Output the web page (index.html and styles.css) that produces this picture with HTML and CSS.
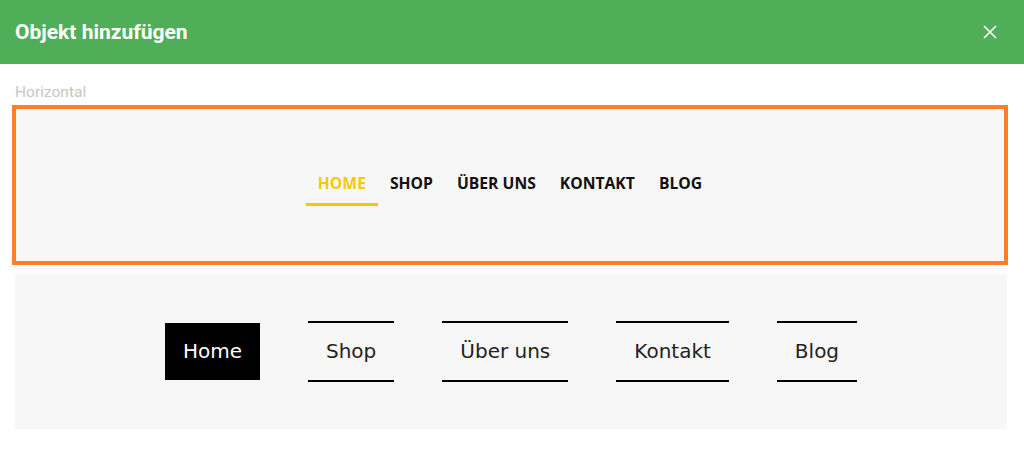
FILE: index.html
```html
<!DOCTYPE html>
<html lang="de">
<head>
    <meta charset="UTF-8">
    <meta name="viewport" content="width=device-width, initial-scale=1.0">
    <title>Objekt hinzufügen</title>
    <link rel="stylesheet" href="styles.css">
</head>
<body>
    <div class="dialog">
        <div class="dialog-header">
            <h1>Objekt hinzufügen</h1>
            <button class="close" aria-label="Schließen">
                <svg width="14" height="14" viewBox="0 0 14 14"><path d="M1 1 L13 13 M13 1 L1 13" stroke="#fff" stroke-width="1.6" fill="none"/></svg>
            </button>
        </div>
        <div class="dialog-body">
            <div class="label">Horizontal</div>
            <div class="preview selected">
                <ul class="nav-caps">
                    <li class="active">HOME</li>
                    <li>SHOP</li>
                    <li>ÜBER UNS</li>
                    <li>KONTAKT</li>
                    <li>BLOG</li>
                </ul>
            </div>
            <div class="preview">
                <ul class="nav-lines">
                    <li class="active">Home</li>
                    <li>Shop</li>
                    <li>Über uns</li>
                    <li>Kontakt</li>
                    <li>Blog</li>
                </ul>
            </div>
        </div>
    </div>
</body>
</html>
```

FILE: styles.css
```css
body { margin: 0; background: #fff; font-family: Roboto, "Liberation Sans", sans-serif; }
.dialog-header { height: 64px; background: #50ae58; display: flex; align-items: center; justify-content: space-between; padding: 0 15px; }
.dialog-header h1 { margin: 0; color: #fff; font-size: 21px; font-weight: 700; }
.close { background: none; border: 0; padding: 0; width: 14px; height: 14px; margin-right: 12px; display: flex; }
.dialog-body { padding: 20px 17px 0 15px; }
.label { color: #c6c6c6; font-size: 15.5px; line-height: 16px; margin-bottom: 5px; }
.preview { background: #f7f7f7; height: 155px; display: flex; align-items: center; justify-content: center; margin-bottom: 12px; }
.preview.selected { border: 4px solid #fd7f28; margin: 0 -1px 9px -3px; height: 152px; }
ul { list-style: none; margin: 0; padding: 0; display: flex; }
.nav-caps li { font-family: "Open Sans", sans-serif; font-weight: 700; font-size: 15.7px; line-height: 20px; color: #111; padding: 9px 12px 10px; border-bottom: 3px solid transparent; }
.nav-caps li.active { color: #f8c70a; border-bottom-color: #f8c70a; }
.nav-lines { gap: 48px; }
.nav-lines li { font-family: "DejaVu Sans", sans-serif; font-size: 20px; color: #222; padding: 0 18px; height: 57px; line-height: 57px; border-top: 2px solid #000; border-bottom: 2px solid #000; }
.nav-lines li.active { background: #000; background-clip: padding-box; color: #fff; border-color: transparent; }
```
